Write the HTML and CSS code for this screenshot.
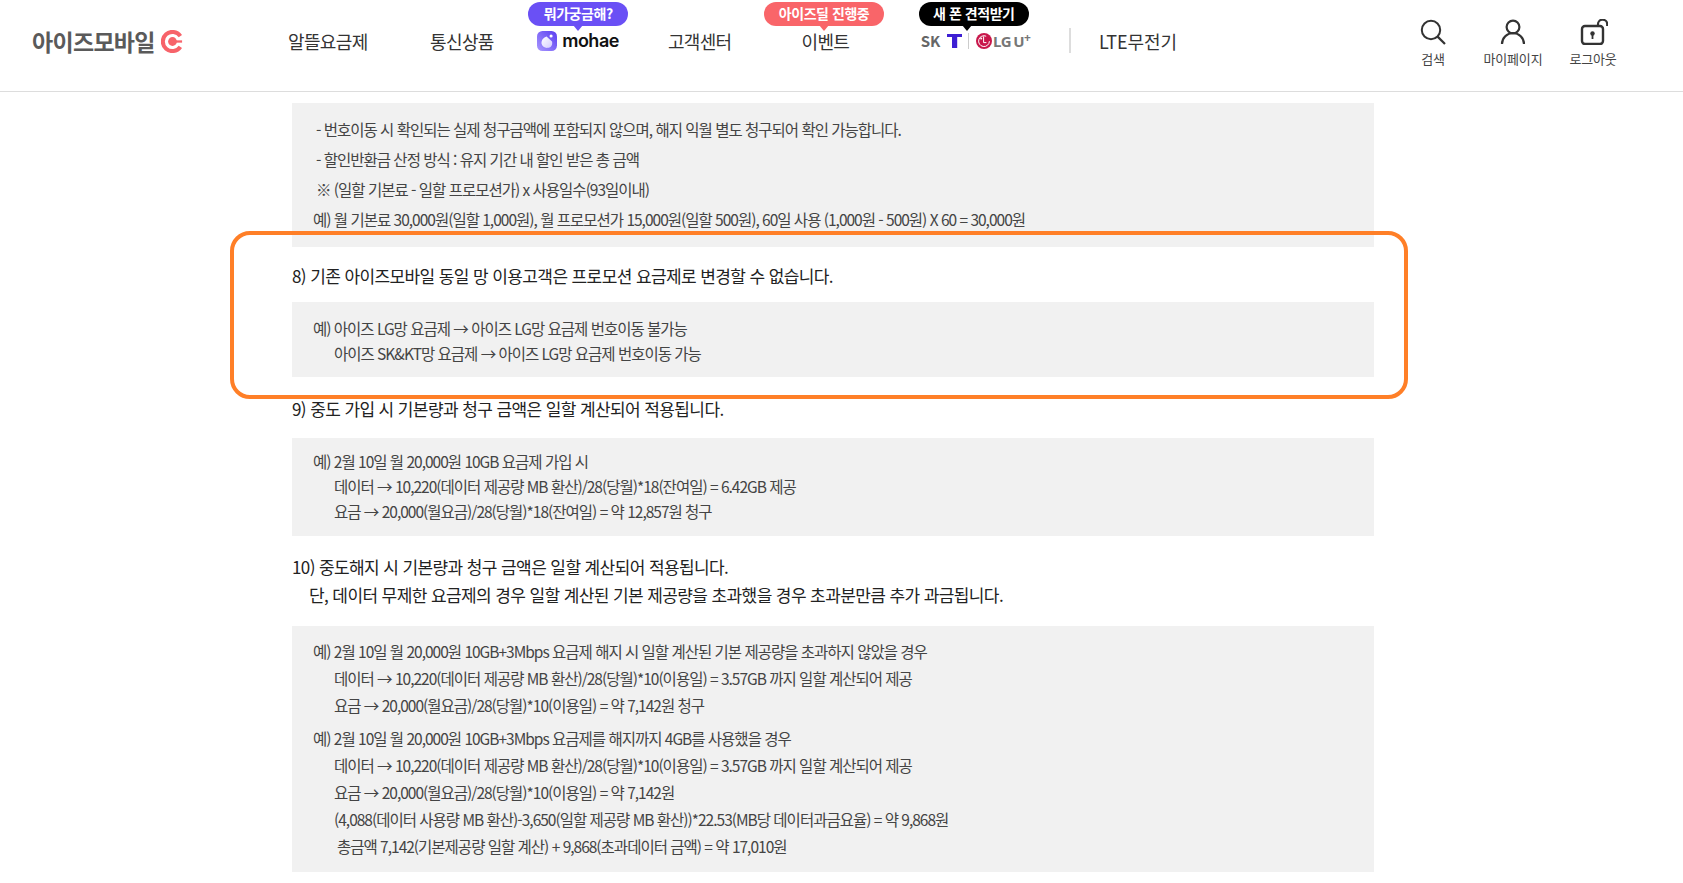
FILE: index.html
```html
<!DOCTYPE html>
<html lang="ko">
<head>
<meta charset="utf-8">
<title>아이즈모바일</title>
<link rel="stylesheet" href="styles.css">
</head>
<body>
<header class="site-header">
  <a class="logo">
    <span class="logo-text">아이즈모바일</span>
    <svg class="logo-mark" viewBox="0 0 24 24" width="23" height="23"><path d="M20.2 6.4A10 10 0 1 0 20.2 17.6" fill="none" stroke="#f7636a" stroke-width="4.2"/><circle cx="12" cy="12" r="4.6" fill="#f7636a"/><rect x="15" y="10.8" width="7" height="2.4" fill="#f7636a"/></svg>
  </a>
  <nav class="nav">
    <a class="nav-item nav-plan">알뜰요금제</a>
    <a class="nav-item nav-comm">통신상품</a>
    <a class="nav-item nav-mohae">
      <span class="bubble bubble-purple">뭐가궁금해?</span>
      <svg class="mohae-icon" viewBox="0 0 22 22" width="20" height="20"><defs><linearGradient id="mg" x1="0" y1="1" x2="1" y2="0"><stop offset="0" stop-color="#a897ff"/><stop offset="1" stop-color="#5a3df0"/></linearGradient><linearGradient id="mb" x1="0" y1="0" x2="1" y2="1"><stop offset="0" stop-color="#fff"/><stop offset="1" stop-color="#d4ccff"/></linearGradient></defs><rect width="22" height="22" rx="6" fill="url(#mg)"/><path d="M5 14c-.5-4 2.500-7 5.500-8l6 5.500c1 3.500-1 7-4.500 7-3.500.5-6-1.500-7-4.500z" fill="url(#mb)"/><circle cx="15.500" cy="5.500" r="1.700" fill="#fff"/></svg>
      <span class="mohae-text">mohae</span>
    </a>
    <a class="nav-item nav-center">고객센터</a>
    <a class="nav-item nav-event"><span class="bubble bubble-coral">아이즈딜 진행중</span>이벤트</a>
    <a class="nav-item nav-carrier">
      <span class="bubble bubble-black">새 폰 견적받기</span>
      <span class="carrier-sk">SK</span>
      <svg class="carrier-t" viewBox="0 0 15 14" width="15" height="14"><path d="M0 0h15v3H10.200V14H5V3H0z" fill="#3d1fd3"/></svg>
      <span class="carrier-sep"></span>
      <svg class="carrier-lg" viewBox="0 0 16 16" width="16" height="16"><circle cx="8" cy="8" r="8" fill="#c8174b"/><circle cx="5.200" cy="5.400" r="1" fill="#fff"/><path d="M7.600 3.400v6.200h2.800M13.400 8.200a5.400 5.400 0 1 1-3.200-5" fill="none" stroke="#fff" stroke-width="1"/></svg>
      <span class="carrier-lgu">LG U<sup class="plus">+</sup></span>
    </a>
    <span class="nav-divider"></span>
    <a class="nav-item nav-lte">LTE무전기</a>
  </nav>
  <div class="utils">
    <a class="util util-search">
      <svg viewBox="0 0 26 26" width="26" height="26"><circle cx="11" cy="11" r="9.200" fill="none" stroke="#333" stroke-width="2"/><path d="M17.600 17.600L25 25" stroke="#333" stroke-width="2.200" fill="none"/></svg>
      <span>검색</span>
    </a>
    <a class="util util-my">
      <svg viewBox="0 0 26 26" width="26" height="26"><circle cx="13" cy="8" r="6.400" fill="none" stroke="#333" stroke-width="2.200"/><path d="M2 25c0-6 5-11 11-11s11 5 11 11" fill="none" stroke="#333" stroke-width="2.200"/></svg>
      <span>마이페이지</span>
    </a>
    <a class="util util-logout">
      <svg viewBox="0 0 30 26" width="30" height="26"><rect x="4" y="7" width="21" height="18" rx="3" fill="none" stroke="#333" stroke-width="2.400"/><path d="M20 7V5.500a4.600 4.600 0 0 1 9.200-.5v2" fill="none" stroke="#333" stroke-width="2.200"/><circle cx="14.500" cy="14.500" r="2.200" fill="#333"/><rect x="13.600" y="15" width="1.800" height="5" fill="#333"/></svg>
      <span>로그아웃</span>
    </a>
  </div>
</header>
<main class="content">
  <div class="note note-first">
    <p class="bullet">- 번호이동 시 확인되는 실제 청구금액에 포함되지 않으며, 해지 익월 별도 청구되어 확인 가능합니다.</p>
    <p class="bullet">- 할인반환금 산정 방식 : 유지 기간 내 할인 받은 총 금액</p>
    <p class="bullet">※ (일할 기본료 - 일할 프로모션가) x 사용일수(93일이내)</p>
    <p>예) 월 기본료 30,000원(일할 1,000원), 월 프로모션가 15,000원(일할 500원), 60일 사용 (1,000원 - 500원) X 60 = 30,000원</p>
  </div>
  <h3 class="term term-8">8) 기존 아이즈모바일 동일 망 이용고객은 프로모션 요금제로 변경할 수 없습니다.</h3>
  <div class="note note-8">
    <p>예) 아이즈 LG망 요금제 → 아이즈 LG망 요금제 번호이동 불가능</p>
    <p class="sub">아이즈 SK&amp;KT망 요금제 → 아이즈 LG망 요금제 번호이동 가능</p>
  </div>
  <h3 class="term term-9">9) 중도 가입 시 기본량과 청구 금액은 일할 계산되어 적용됩니다.</h3>
  <div class="note note-9">
    <p>예) 2월 10일 월 20,000원 10GB 요금제 가입 시</p>
    <p class="sub">데이터 → 10,220(데이터 제공량 MB 환산)/28(당월)*18(잔여일) = 6.42GB 제공</p>
    <p class="sub">요금 → 20,000(월요금)/28(당월)*18(잔여일) = 약 12,857원 청구</p>
  </div>
  <h3 class="term term-10">10) 중도해지 시 기본량과 청구 금액은 일할 계산되어 적용됩니다.<br><span class="term-indent">단, 데이터 무제한 요금제의 경우 일할 계산된 기본 제공량을 초과했을 경우 초과분만큼 추가 과금됩니다.</span></h3>
  <div class="note note-10">
    <div class="group">
      <p>예) 2월 10일 월 20,000원 10GB+3Mbps 요금제 해지 시 일할 계산된 기본 제공량을 초과하지 않았을 경우</p>
      <p class="sub">데이터 → 10,220(데이터 제공량 MB 환산)/28(당월)*10(이용일) = 3.57GB 까지 일할 계산되어 제공</p>
      <p class="sub">요금 → 20,000(월요금)/28(당월)*10(이용일) = 약 7,142원 청구</p>
    </div>
    <div class="group">
      <p>예) 2월 10일 월 20,000원 10GB+3Mbps 요금제를 해지까지 4GB를 사용했을 경우</p>
      <p class="sub">데이터 → 10,220(데이터 제공량 MB 환산)/28(당월)*10(이용일) = 3.57GB 까지 일할 계산되어 제공</p>
      <p class="sub">요금 → 20,000(월요금)/28(당월)*10(이용일) = 약 7,142원</p>
      <p class="sub">(4,088(데이터 사용량 MB 환산)-3,650(일할 제공량 MB 환산))*22.53(MB당 데이터과금요율) = 약 9,868원</p>
      <p class="sub sub-total">총금액 7,142(기본제공량 일할 계산) + 9,868(초과데이터 금액) = 약 17,010원</p>
    </div>
  </div>
  <div class="highlight"></div>
</main>
</body>
</html>
```
FILE: styles.css
```css
* { box-sizing: border-box; }
html, body { margin: 0; padding: 0; }
body {
  width: 1683px;
  height: 883px;
  overflow: hidden;
  background: #fff;
  font-family: "Noto Sans CJK KR", "Noto Sans", sans-serif;
  color: #333;
}
p, h3 { margin: 0; }

.site-header {
  display: flex;
  align-items: flex-start;
  height: 92px;
  border-bottom: 1px solid #ddd;
}
.logo { display: flex; align-items: center; margin: 28px 0 0 32px; width: 151px; white-space: nowrap; }
.logo-text { font-size: 23px; line-height: 26px; font-weight: 700; color: #5a5a5a; letter-spacing: -0.7px; }
.logo-mark { margin-left: 6px; flex: none; }

.nav { display: flex; align-items: flex-start; margin-left: 105px; }
.nav-item {
  position: relative;
  display: flex;
  align-items: center;
  height: 24px;
  margin-top: 29px;
  font-size: 18px;
  line-height: 24px;
  color: #333;
  letter-spacing: -0.65px;
  white-space: nowrap;
}
.nav-comm { margin-left: 62.5px; }
.nav-mohae { margin-left: 43.5px; }
.nav-center { margin-left: 49px; }
.nav-event { margin-left: 70px; }
.nav-carrier { margin-left: 71.5px; }
.nav-lte { margin-left: 28px; letter-spacing: -0.1px; }

.bubble {
  position: absolute;
  top: -27px;
  height: 24px;
  line-height: 23px;
  border-radius: 12px;
  color: #fff;
  font-size: 14px;
  font-weight: 700;
  text-align: center;
  letter-spacing: -0.45px;
}
.bubble::after {
  content: "";
  position: absolute;
  top: 23px;
  left: 50%;
  margin-left: -5px;
  border-style: solid;
  border-width: 6px 5px 0;
  border-color: inherit;
  border-left-color: transparent;
  border-right-color: transparent;
}
.bubble-purple { left: -9px; width: 100px; background: #6a50f5; border-color: #6a50f5; }
.bubble-coral { left: -37.5px; width: 120px; background: #f96569; border-color: #f96569; }
.bubble-black { left: -2px; width: 110px; background: #000; border-color: #000; }
.bubble-black::after { left: 48px; }

.mohae-icon { flex: none; }
.mohae-text { margin-left: 5px; font-family: Inter, "Noto Sans", sans-serif; font-size: 18px; font-weight: 600; color: #111; letter-spacing: -0.5px; }

.carrier-sk { font-size: 15px; font-weight: 700; color: #666; letter-spacing: -0.2px; line-height: 14px; }
.carrier-t { margin-left: 7px; flex: none; }
.carrier-sep { width: 1px; height: 16px; margin-left: 6px; background: #ccc; }
.carrier-lg { margin-left: 7px; flex: none; }
.carrier-lgu { margin-left: 1px; font-family: "Noto Sans", sans-serif; font-size: 15px; font-weight: 700; color: #777; letter-spacing: -0.4px; word-spacing: -1.5px; line-height: 14px; }
.plus { font-size: 12px; line-height: 0; vertical-align: 5px; }

.nav-divider { width: 2px; height: 25px; margin: 28px 0 0 38.5px; background: #ddd; }

.utils { display: flex; position: absolute; left: 1420px; top: 19px; }
.util { display: flex; flex-direction: column; align-items: center; font-size: 13px; color: #444; letter-spacing: -0.2px; white-space: nowrap; }
.util svg { flex: none; }
.util span { line-height: 18px; margin-top: 5px; }
.util-search { width: 26px; }
.util-my { width: 62px; margin-left: 36px; }
.util-logout { width: 50px; margin-left: 24px; }

.content { position: relative; width: 1082px; margin-left: 292px; padding: 11px 0 11px; }
.note { background: #f1f1f1; padding-left: 21px; font-size: 15.5px; color: #444; letter-spacing: -1px; white-space: nowrap; }
.term { font-size: 17px; line-height: 28px; font-weight: 400; color: #222; letter-spacing: -0.6px; white-space: nowrap; }
.term-indent { margin-left: 17px; }

.note-first { padding-top: 11px; padding-bottom: 13px; line-height: 30px; }
.bullet { padding-left: 3px; }
.note-8 { padding-top: 14px; padding-bottom: 11px; line-height: 25px; }
.note-9 { padding-top: 11px; padding-bottom: 12px; line-height: 25px; }
.note-10 { padding-top: 12px; padding-bottom: 12px; line-height: 27px; }
.group + .group { margin-top: 6px; }
.sub { padding-left: 21px; }
.sub-total { padding-left: 24px; }

.term-8 { margin: 15px 0 12px; }
.term-9 { margin: 18px 0 15px; }
.term-10 { margin: 17px 0 17px; }

.highlight {
  position: absolute;
  left: -62px;
  top: 139px;
  width: 1178px;
  height: 168px;
  border: 4px solid #ff7f27;
  border-radius: 20px;
}
```
